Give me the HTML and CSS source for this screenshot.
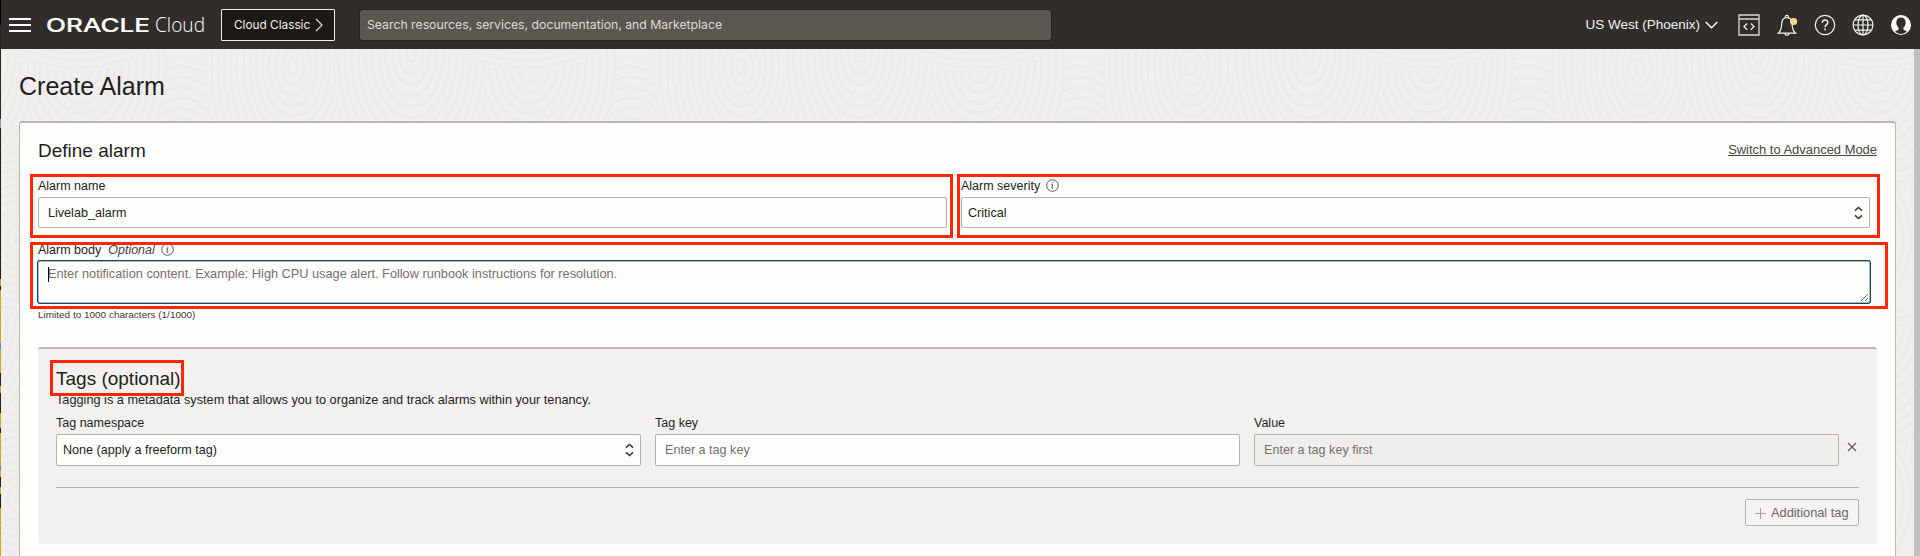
FILE: index.html
```html
<!DOCTYPE html>
<html lang="en">
<head>
<meta charset="utf-8">
<title>Create Alarm</title>
<link rel="stylesheet" href="styles.css">
</head>
<body>
<div class="edge"></div>
<div class="app">
  <header class="topbar">
    <svg class="menu" width="22" height="14" viewBox="0 0 22 14"><path d="M0 1h22M0 7h22M0 13h22" stroke="#fff" stroke-width="2"/></svg>
    <svg class="logo" width="164" height="36" viewBox="0 0 164 36">
      <text class="logo-brand" x="0" y="25" textLength="104" lengthAdjust="spacingAndGlyphs">ORACLE</text>
      <text class="logo-product" x="109" y="25" textLength="50" lengthAdjust="spacingAndGlyphs">Cloud</text>
    </svg>
    <div class="classic"><span>Cloud Classic</span><svg width="8" height="14" viewBox="0 0 8 14"><path d="M1 1l6 6-6 6" fill="none" stroke="#e8e6e3" stroke-width="1.1"/></svg></div>
    <div class="search">Search resources, services, documentation, and Marketplace</div>
    <div class="region"><span>US West (Phoenix)</span><svg width="13" height="8" viewBox="0 0 13 8"><path d="M.7 1l5.8 5.8L12.3 1" fill="none" stroke="#fff" stroke-width="1.4"/></svg></div>
    <div class="tools">
      <svg width="22" height="22" viewBox="0 0 22 22" fill="none" stroke="#d9dad7" stroke-width="1.3"><path d="M1 1h20v20H1zM1 5h20"/><path d="M9.2 9.5L6 12.6l3.2 3.1M12.8 9.5l3.2 3.1-3.2 3.1" stroke="#f2f2f0"/></svg>
      <svg width="22" height="22" viewBox="0 0 22 22" fill="none" stroke="#f2f2f0" stroke-width="1.2"><path d="M2.2 19.2h17.4c-2.3-2-3-3.600-3.200-6.200l-.3-3.500C15.800 6 14 3.600 10.900 3.600S6 6 5.700 9.500L5.400 13c-.2 2.600-.9 4.200-3.200 6.200z"/><path d="M9.300 3.600c-.4-3 3.600-3 3.200 0M8.800 19.500c.5 2.300 3.700 2.300 4.200 0"/><circle cx="17.600" cy="7.500" r="3.600" fill="#f7d78c" stroke="none"/></svg>
      <svg width="22" height="22" viewBox="0 0 22 22" fill="none" stroke="#f2f2f0" stroke-width="1.200"><circle cx="11" cy="11" r="9.700"/><path d="M8.300 8.800c0-3.600 5.500-3.500 5.500-.3 0 2.300-2.700 2.100-2.700 4.700" stroke-width="1.500"/><path d="M11.100 14.600v1.700" stroke-width="1.600"/></svg>
      <svg width="22" height="22" viewBox="0 0 22 22" fill="none" stroke="#f2f2f0" stroke-width="1.200"><circle cx="11" cy="11" r="9.900"/><ellipse cx="11" cy="11" rx="5" ry="9.900"/><path d="M11 1v20M1 11h20M3 5.800h16M3 16.200h16"/></svg>
      <svg width="22" height="22" viewBox="0 0 22 22"><circle cx="11" cy="11" r="10" fill="#fff"/><path d="M11 3.400c-3 0-4.700 2.100-4.700 5 0 2.200.9 4 2.300 5.100v1.900l-3.500 2.100C6.800 19 8.800 19.900 11 19.900s4.200-.9 5.900-2.400l-3.500-2.100v-1.900c1.400-1.100 2.300-2.900 2.300-5.100 0-2.900-1.700-5-4.700-5z" fill="#312d2a"/></svg>
    </div>
  </header>

  <main class="page">
    <svg class="texture" width="1913" height="507">
      <defs>
        <radialGradient id="rings" gradientUnits="userSpaceOnUse" cx="0" cy="0" r="8" spreadMethod="repeat">
          <stop offset="0" stop-color="#f0efee"/><stop offset=".45" stop-color="#f0efee"/><stop offset=".75" stop-color="#ebeae9"/><stop offset="1" stop-color="#f0efee"/>
        </radialGradient>
        <pattern id="waves" width="449" height="260" patternUnits="userSpaceOnUse">
          <rect width="449" height="260" fill="#f0efee"/>
          <g fill="url(#rings)">
            <circle r="110" transform="translate(180 150) scale(.7 1.300)"/>
            <circle r="100" transform="translate(350 190)"/>
            <circle r="100" transform="translate(20 190)"/>
            <circle r="100" transform="translate(469 190)"/>
            <circle r="95" transform="translate(80 15) scale(.9 1.300)"/>
            <circle r="110" transform="translate(292 18) scale(.8 1.300)"/>
            <circle r="90" transform="translate(410 5) scale(.85 1.400)"/>
            <circle r="90" transform="translate(-39 5) scale(.85 1.400)"/>
            <circle r="90" transform="translate(76 -59) scale(1.300 .9)"/>
          </g>
        </pattern>
      </defs>
      <rect width="1913" height="507" fill="url(#waves)"/>
    </svg>

    <div class="content">
      <h1 class="title">Create Alarm</h1>
      <section class="panel">
        <div class="panel-head">
          <h2 class="section-title">Define alarm</h2>
          <a class="mode-link">Switch to Advanced Mode</a>
        </div>

        <div class="form">
          <div class="row">
            <div class="field">
              <label class="label">Alarm name</label>
              <input class="input" value="Livelab_alarm">
            </div>
            <div class="field">
              <label class="label">Alarm severity<svg class="info" width="13" height="13" viewBox="0 0 13 13"><circle cx="6.500" cy="6.500" r="5.800" fill="none" stroke="#4a4744" stroke-width=".9"/><path d="M5.300 5.700h1.300l-.7 3.600h1.200M6.800 3.300v1.200" fill="none" stroke="#4a4744" stroke-width=".9"/></svg></label>
              <div class="select"><span>Critical</span><svg width="9" height="14" viewBox="0 0 9 14"><path d="M1 4.600l3.500-3.200L8 4.600M1 9.400l3.500 3.200L8 9.400" fill="none" stroke="#3a3631" stroke-width="1.500"/></svg></div>
            </div>
          </div>

          <div class="field body-field">
            <label class="label">Alarm body<i class="optional">Optional</i><svg class="info" width="13" height="13" viewBox="0 0 13 13"><circle cx="6.500" cy="6.500" r="5.800" fill="none" stroke="#4a4744" stroke-width=".9"/><path d="M5.300 5.700h1.300l-.7 3.600h1.200M6.800 3.300v1.200" fill="none" stroke="#4a4744" stroke-width=".9"/></svg></label>
            <div class="area-wrap">
              <textarea class="area" placeholder="Enter notification content. Example: High CPU usage alert. Follow runbook instructions for resolution."></textarea>
              <span class="caret"></span>
            </div>
            <div class="hint">Limited to 1000 characters (1/1000)</div>
          </div>
        </div>

        <section class="tags">
          <h2 class="section-title tags-title">Tags (optional)</h2>
          <p class="tags-text">Tagging is a metadata system that allows you to organize and track alarms within your tenancy.</p>
          <div class="tag-row">
            <div class="field">
              <label class="label">Tag namespace</label>
              <div class="select tall"><span>None (apply a freeform tag)</span><svg width="9" height="14" viewBox="0 0 9 14"><path d="M1 4.600l3.500-3.200L8 4.600M1 9.400l3.500 3.200L8 9.400" fill="none" stroke="#3a3631" stroke-width="1.500"/></svg></div>
            </div>
            <div class="field">
              <label class="label">Tag key</label>
              <input class="input tall" placeholder="Enter a tag key">
            </div>
            <div class="field">
              <label class="label">Value</label>
              <input class="input tall" placeholder="Enter a tag key first" disabled>
            </div>
            <svg class="remove" width="10" height="10" viewBox="0 0 10 10"><path d="M1 1l8 8M9 1l-8 8" stroke="#5b5753" stroke-width="1.100"/></svg>
          </div>
          <div class="tag-actions">
            <button class="add"><svg class="plus" width="11" height="11" viewBox="0 0 11 11"><path d="M5.500 0v11M0 5.500h11" stroke="#a8a39f" stroke-width="1.100"/></svg>Additional tag</button>
          </div>
        </section>
      </section>
    </div>
  </main>
</div>
<div class="scrollbar"></div>
<div class="mark mark-name"></div>
<div class="mark mark-severity"></div>
<div class="mark mark-body"></div>
<div class="mark mark-tags"></div>
</body>
</html>
```

FILE: styles.css
```css
* { box-sizing: border-box; }
body {
  margin: 0;
  width: 1920px;
  height: 556px;
  overflow: hidden;
  position: relative;
  display: flex;
  font: 12.5px/16px "Liberation Sans", Arial, sans-serif;
  color: #221f1c;
}
h1, h2, p { margin: 0; font-weight: 400; }
svg { display: block; flex: none; }

.edge {
  width: 1px;
  height: 556px;
  background: linear-gradient(#000 0 25px, #26262a 25px 119px, #9a9a9a 119px 128px, #1d1b20 128px 279px, #d4a90d 279px 286px, #222 286px 290px, #d4a90d 290px 343px, #3b8bf0 343px 349px, #d4a90d 349px 373px, #222 373px 386px, #d4a90d 386px 393px, #222 393px 413px, #d4a90d 413px 428px, #222 428px 433px, #d4a90d 433px 466px, #3b8bf0 466px 470px, #d4a90d 470px 477px, #222 477px 487px, #d4a90d 487px 494px, #222 494px 508px, #d4a90d 508px);
}
.app { width: 1919px; display: flex; flex-direction: column; }

.topbar {
  height: 49px;
  background: #312d2a;
  display: flex;
  align-items: center;
  padding: 0 8px;
  color: #f2f1ef;
}
.logo { margin-left: 15px; overflow: visible; }
.logo-brand { font: 500 18.5px "Inter", sans-serif; fill: #fff; stroke: #fff; stroke-width: .2px; }
.logo-product { font: 300 20px "Open Sans", sans-serif; fill: #fff; }
.classic {
  width: 114px;
  height: 32px;
  margin-left: 11px;
  padding: 0 11px 0 12px;
  border: 1px solid #f0eeeb;
  border-radius: 1px;
  background: #1d1915;
  display: flex;
  align-items: center;
  justify-content: space-between;
  font-family: Inter, sans-serif;
  font-size: 11.8px;
}
.search {
  width: 691px;
  height: 30px;
  margin-left: 25px;
  padding: 0 7px;
  border-radius: 3px;
  background: #5b564f;
  box-shadow: 0 0 0 1px #262320;
  color: #dedbd7;
  font: 12.25px/30px Inter, sans-serif;
}
.region { display: flex; align-items: center; gap: 5px; margin-left: auto; font-size: 13.5px; }
.tools { display: flex; gap: 16px; margin-left: 20px; }

.page { flex: 1; position: relative; overflow: hidden; }
.texture { position: absolute; inset: 0; }
.content { position: relative; padding: 22px 24px 0 18px; height: 100%; display: flex; flex-direction: column; }
.title { font-size: 25px; line-height: 30px; }
.panel {
  flex: 1;
  margin-top: 20px;
  padding: 16px 18px 0;
  background: #fdfdfc;
  border: 1px solid #bcb6b1;
  border-top-width: 2px;
  border-bottom: 0;
  border-radius: 3px 3px 0 0;
}
.panel-head { display: flex; justify-content: space-between; height: 24px; }
.section-title { font-size: 19px; line-height: 24px; }
.mode-link { margin-top: 3px; font-size: 12.95px; text-decoration: underline; text-underline-offset: 1px; color: #494643; }
.form { width: 1832px; margin-top: 15px; }
.row { display: flex; gap: 14px; }
.field { flex: 1; min-width: 0; }
.label { display: flex; align-items: center; height: 16px; margin-bottom: 3px; }
.info { margin: 0 0 1px 6px; }
.optional { margin-left: 7px; color: #45413d; }

.input, .select {
  display: flex;
  width: 100%;
  height: 31px;
  margin: 0;
  border: 1px solid #b5b1ac;
  border-radius: 2px;
  background: #fdfdfc;
  color: #221f1c;
  font: 12.6px "Liberation Sans", Arial, sans-serif;
}
.input { padding: 0 9px; }
.select { align-items: center; justify-content: space-between; padding: 0 6px; }
.tall { height: 32px; }
.input::placeholder, .area::placeholder { color: #75706c; opacity: 1; }
.input:disabled { background: #efeeec; border-color: #b9b5aa; }

.body-field { margin-top: 14px; }
.area-wrap { position: relative; }
.area {
  display: block;
  width: 100%;
  height: 42px;
  margin: 0;
  padding: 4px 9px;
  border: 1px solid #b5b9bb;
  border-radius: 2px;
  box-shadow: 0 0 0 1px #0f4763;
  background: #fdfdfc;
  font: 12.74px/16px "Liberation Sans", Arial, sans-serif;
  outline: 0;
}
.caret { position: absolute; left: 10px; top: 6px; width: 1px; height: 15px; background: #000; }
.hint { margin-top: 6px; font-size: 9.98px; line-height: 12px; color: #3c3936; }

.tags {
  height: 197px;
  margin-top: 26px;
  padding: 19px 18px 0;
  border-top: 2px solid #bfb8b2;
  border-radius: 3px;
  background: #f3f1f0;
}
.tags-title { font-size: 19px; line-height: 22px; }
.tags-text { margin-top: 2px; font-size: 12.73px; }
.tag-row { display: flex; gap: 14px; margin-top: 7px; padding-bottom: 21px; border-bottom: 1px solid #b5b1ac; }
.remove { align-self: flex-end; margin: 0 2px 14px -6px; }
.tag-actions { display: flex; justify-content: flex-end; margin-top: 11px; }
.add {
  width: 114px;
  height: 27px;
  padding: 0 9px;
  display: flex;
  align-items: center;
  gap: 5px;
  border: 1px solid #b5b1ac;
  border-radius: 2px;
  background: #f5f4f3;
  color: #6b6663;
  white-space: nowrap;
  font: 12.8px "Liberation Sans", Arial, sans-serif;
}
.plus { margin-top: 2px; }
.scrollbar { position: absolute; right: 0; top: 49px; width: 6px; height: 507px; background: #c1c0bf; }

/* Highlight boxes drawn over the form */
.mark { position: absolute; border: 3px solid #ff2600; }
.mark-name { left: 30px; top: 174px; width: 923px; height: 64px; }
.mark-severity { left: 957px; top: 174px; width: 923px; height: 64px; }
.mark-body { left: 30px; top: 242px; width: 1858px; height: 67px; }
.mark-tags { left: 50px; top: 360px; width: 134px; height: 36px; }
```
